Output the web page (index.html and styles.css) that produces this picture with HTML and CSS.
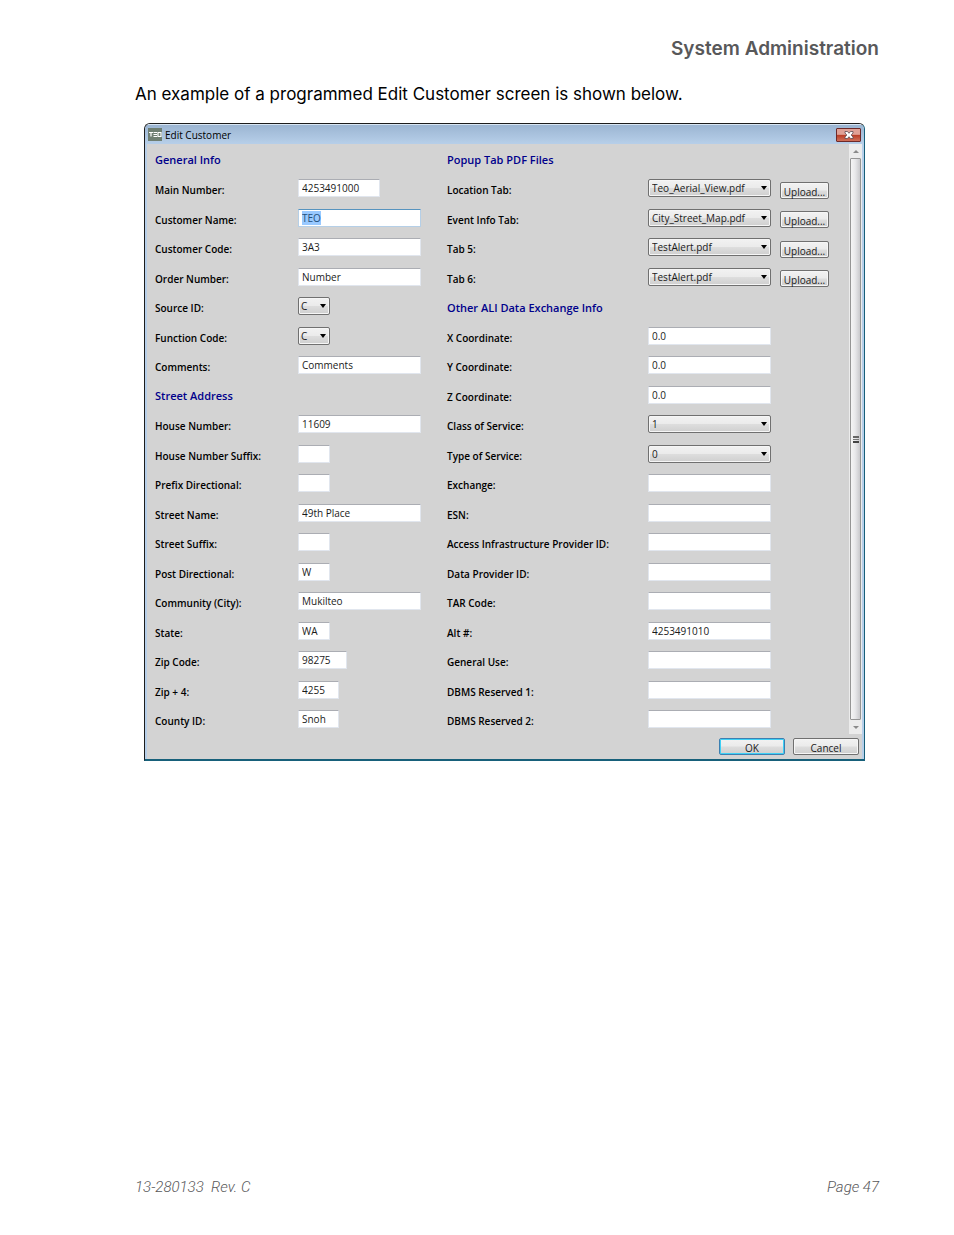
FILE: index.html
```html
<!DOCTYPE html>
<html lang="en">
<head>
<meta charset="utf-8">
<title>System Administration</title>
<link rel="stylesheet" href="styles.css">
</head>
<body>
<header class="page-head">System Administration</header>
<main class="page-main">
<p class="intro">An example of a programmed Edit Customer screen is shown below.</p>
<section class="window" aria-label="Edit Customer">
  <div class="titlebar">
    <svg class="logo" viewBox="0 0 14 13" aria-hidden="true"><rect width="14" height="13" fill="#6f7f72"/><path d="M1 4.5h4M3 4.5v4M5.500 4.500h3.500M5.500 6.500h3.500M5.500 8.500h3.500M10 4.500h3v4h-3z" fill="none" stroke="#fff" stroke-width="1.200"/></svg>
    <span class="title">Edit Customer</span>
    <button class="close" type="button" aria-label="Close"><svg viewBox="0 0 10 8" aria-hidden="true"><path d="M1 .5h2.500L5 2.300 6.500.5H9v1.500L7.200 4 9 6v1.500H6.500L5 5.700 3.500 7.500H1V6l1.800-2L1 2z" fill="#fff" stroke="#5a4a50" stroke-width=".8"/></svg></button>
  </div>
  <form class="dialog">
    <div class="viewport">
      <div class="col col-left">
        <h2 class="row group">General Info</h2>
        <div class="row"><label for="main">Main Number:</label><input id="main" class="field w-phone" value="4253491000"></div>
        <div class="row"><label for="cname">Customer Name:</label><input id="cname" class="field active" value="TEO"></div>
        <div class="row"><label for="ccode">Customer Code:</label><input id="ccode" class="field" value="3A3"></div>
        <div class="row"><label for="order">Order Number:</label><input id="order" class="field" value="Number"></div>
        <div class="row"><label for="source">Source ID:</label><span class="combo w-mini"><select id="source"><option>C</option></select></span></div>
        <div class="row"><label for="func">Function Code:</label><span class="combo w-mini"><select id="func"><option>C</option></select></span></div>
        <div class="row"><label for="comments">Comments:</label><input id="comments" class="field" value="Comments"></div>
        <h2 class="row group">Street Address</h2>
        <div class="row"><label for="house">House Number:</label><input id="house" class="field" value="11609"></div>
        <div class="row"><label for="hsuf">House Number Suffix:</label><input id="hsuf" class="field w-mini"></div>
        <div class="row"><label for="prefix">Prefix Directional:</label><input id="prefix" class="field w-mini"></div>
        <div class="row"><label for="street">Street Name:</label><input id="street" class="field" value="49th Place"></div>
        <div class="row"><label for="ssuf">Street Suffix:</label><input id="ssuf" class="field w-mini"></div>
        <div class="row"><label for="post">Post Directional:</label><input id="post" class="field w-mini" value="W"></div>
        <div class="row"><label for="city">Community (City):</label><input id="city" class="field" value="Mukilteo"></div>
        <div class="row"><label for="state">State:</label><input id="state" class="field w-mini" value="WA"></div>
        <div class="row"><label for="zip">Zip Code:</label><input id="zip" class="field w-zip" value="98275"></div>
        <div class="row"><label for="zip4">Zip + 4:</label><input id="zip4" class="field w-code" value="4255"></div>
        <div class="row"><label for="county">County ID:</label><input id="county" class="field w-code" value="Snoh"></div>
      </div>
      <div class="col col-right">
        <h2 class="row group">Popup Tab PDF Files</h2>
        <div class="row"><label for="loc">Location Tab:</label><span class="combo"><select id="loc"><option>Teo_Aerial_View.pdf</option></select></span><button class="btn upload" type="button">Upload...</button></div>
        <div class="row"><label for="event">Event Info Tab:</label><span class="combo"><select id="event"><option>City_Street_Map.pdf</option></select></span><button class="btn upload" type="button">Upload...</button></div>
        <div class="row"><label for="tab5">Tab 5:</label><span class="combo"><select id="tab5"><option>TestAlert.pdf</option></select></span><button class="btn upload" type="button">Upload...</button></div>
        <div class="row"><label for="tab6">Tab 6:</label><span class="combo"><select id="tab6"><option>TestAlert.pdf</option></select></span><button class="btn upload" type="button">Upload...</button></div>
        <h2 class="row group">Other ALI Data Exchange Info</h2>
        <div class="row"><label for="x">X Coordinate:</label><input id="x" class="field" value="0.0"></div>
        <div class="row"><label for="y">Y Coordinate:</label><input id="y" class="field" value="0.0"></div>
        <div class="row"><label for="z">Z Coordinate:</label><input id="z" class="field" value="0.0"></div>
        <div class="row"><label for="cls">Class of Service:</label><span class="combo"><select id="cls"><option>1</option></select></span></div>
        <div class="row"><label for="type">Type of Service:</label><span class="combo"><select id="type"><option>0</option></select></span></div>
        <div class="row"><label for="exch">Exchange:</label><input id="exch" class="field"></div>
        <div class="row"><label for="esn">ESN:</label><input id="esn" class="field"></div>
        <div class="row"><label for="access">Access Infrastructure Provider ID:</label><input id="access" class="field"></div>
        <div class="row"><label for="data">Data Provider ID:</label><input id="data" class="field"></div>
        <div class="row"><label for="tar">TAR Code:</label><input id="tar" class="field"></div>
        <div class="row"><label for="alt">Alt #:</label><input id="alt" class="field" value="4253491010"></div>
        <div class="row"><label for="use">General Use:</label><input id="use" class="field"></div>
        <div class="row"><label for="db1">DBMS Reserved 1:</label><input id="db1" class="field"></div>
        <div class="row"><label for="db2">DBMS Reserved 2:</label><input id="db2" class="field"></div>
      </div>
      <div class="scrollbar" aria-hidden="true">
        <span class="arrow up"></span>
        <span class="thumb"><i class="grip"></i></span>
        <span class="arrow down"></span>
      </div>
    </div>
    <div class="actions"><button class="btn default" type="button">OK</button><button class="btn" type="button">Cancel</button></div>
  </form>
</section>
</main>
<footer class="page-foot"><span class="rev">13-280133  Rev. C</span><span>Page 47</span></footer>
<script src="script.js"></script>
</body>
</html>
```
FILE: styles.css
```css
* { box-sizing: border-box; }
body {
  margin: 0;
  min-height: 100vh;
  padding: 37px 75px 36px 135px;
  display: flex;
  flex-direction: column;
  background: #fff;
  color: #000;
  font-family: Inter, "Liberation Sans", sans-serif;
}
.page-head {
  text-align: right;
  font-size: 19px;
  line-height: 24px;
  font-weight: 600;
  color: #58585a;
}
.page-main { flex: 1; }
.intro {
  margin: 21px 0 17px;
  font-size: 17px;
  line-height: 24px;
}
.page-foot {
  display: flex;
  justify-content: space-between;
  font-family: Roboto, "Liberation Sans", sans-serif;
  font-size: 15px;
  line-height: 24px;
  font-weight: 300;
  font-style: italic;
  color: #58585a;
}
.rev { white-space: pre; }

.window {
  margin: 0 14px 0 9px;
  border: 1px solid #1c1c1c;
  border-right-color: #17607a;
  border-bottom: 2px solid #17607a;
  border-radius: 6px 6px 0 0;
  background: #d3d3d3;
  font-family: "Open Sans", "Noto Sans", sans-serif;
  font-size: 10px;
  line-height: 14px;
  overflow: hidden;
}
.titlebar {
  height: 20px;
  padding: 0 3px;
  display: flex;
  align-items: center;
  gap: 3px;
  border-top: 1px solid #d8e6f4;
  background: linear-gradient(#9bb5d2, #b7cfe9);
}
.logo { width: 14px; height: 13px; }
.title { flex: 1; }
.close {
  width: 25px;
  height: 14px;
  padding: 0;
  display: flex;
  align-items: center;
  justify-content: center;
  border: 1px solid #6e2a2a;
  border-radius: 1px;
  background: linear-gradient(#e0a196 0 45%, #b93c24 50%, #d0705a);
}
.close svg { width: 10px; height: 8px; }
.dialog {
  border-left: 2px solid #b7cfe9;
  border-right: 2px solid #b7cfe9;
}
.viewport { display: flex; padding-left: 8px; }
.col { min-width: 0; }
.col-left { flex: 292; }
.col-right { flex: 402; }
.row {
  height: 30px;
  margin: 0;
  display: grid;
  align-items: center;
}
.row:nth-child(even) { height: 29px; }
.col-left .row { grid-template-columns: 143fr 149fr; }
.col-right .row { grid-template-columns: 201fr 132fr 69fr; }
.row label { padding-top: 3px; font-weight: 600; white-space: nowrap; }
.col .row.group {
  grid-template-columns: 1fr;
  padding-top: 2px;
  font-size: 11px;
  font-weight: 600;
  color: #00008b;
}
.field, .combo { width: 123px; height: 18px; margin-bottom: 1px; }
.field {
  padding: 0 3px;
  border: 1px solid #e1e6ee;
  border-top-color: #abadb3;
  border-radius: 0;
  background: #fff;
  color: #1a1a1a;
  font: inherit;
  outline: none;
}
.field.active { border-color: #b5cfe7; border-top-color: #5794bf; }
.field::selection { background: #99c9ff; color: #23507c; }
.w-phone { width: 82px; }
.w-mini { width: 32px; }
.w-zip { width: 49px; }
.w-code { width: 41px; }
.combo { position: relative; display: block; }
.combo.w-mini { width: 32px; }
.combo select, .btn {
  border: 1px solid #707070;
  border-radius: 2px;
  background: linear-gradient(#f2f2f2, #ebebeb 48%, #dddddd 52%, #cfcfcf);
  box-shadow: inset 0 0 0 1px #f6f6f6;
  color: #1a1a1a;
  font: inherit;
}
.combo select {
  width: 100%;
  height: 100%;
  padding: 0 3px;
  display: block;
  appearance: none;
}
.combo.w-mini select { padding: 0 2px; }
.combo::after {
  content: "";
  position: absolute;
  right: 4px;
  top: 7px;
  border: 3px solid transparent;
  border-top: 4px solid #000;
  border-bottom: 0;
  pointer-events: none;
}
.btn { width: 66px; height: 17px; padding: 3px 0 0; line-height: 12px; }
.btn.upload { width: 49px; margin-top: 3px; }
.btn.default { border-color: #3c7fb1; box-shadow: inset 0 0 0 1px #3fd0f5; }
.actions {
  display: flex;
  justify-content: flex-end;
  gap: 8px;
  padding: 4px 3px 4px;
}
.scrollbar {
  width: 13px;
  display: flex;
  flex-direction: column;
  background: #ececec;
}
.arrow { height: 14px; display: flex; align-items: center; justify-content: center; }
.arrow::before { content: ""; border: 3px solid transparent; }
.up::before { border-top: 0; border-bottom-color: #8a8a8a; }
.down::before { border-bottom: 0; border-top-color: #8a8a8a; }
.thumb {
  flex: 1;
  margin: 0 1px;
  display: flex;
  align-items: center;
  justify-content: center;
  border: 1px solid #959595;
  border-radius: 1px;
  background: linear-gradient(90deg, #f5f5f5, #e9e9eb 45%, #c9c9cc);
}
.grip {
  width: 6px;
  height: 7px;
  border-top: 2px solid #666;
  border-bottom: 2px solid #444;
  background: linear-gradient(transparent 1px, #777 1px 2px, transparent 2px);
}
```
FILE: script.js
```js
// Open with the customer name ready to be overtyped.
const customerName = document.getElementById("cname");
customerName.focus();
customerName.select();
```
